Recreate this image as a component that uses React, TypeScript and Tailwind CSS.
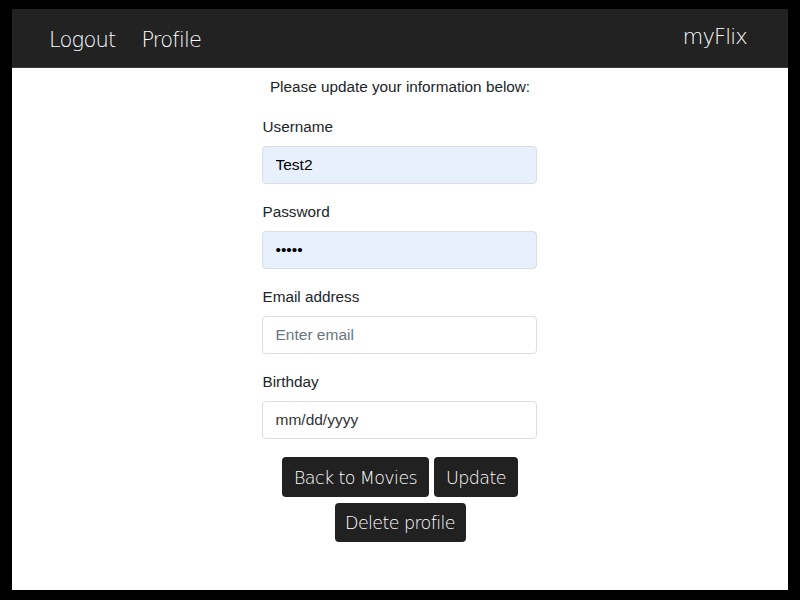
import React from "react";

const thin = { fontFamily: '"DejaVu Sans", sans-serif' };

export default function App() {
  return (
    <div className="w-[800px] h-[600px] bg-black pt-[9px] pl-[12px] pr-[12px] pb-[10px] flex">
      <div className="flex-1 bg-white flex flex-col">
        <header className="h-[59px] bg-[#222222] border-b border-[#3a3a3a] flex items-center pt-[6px] pl-[37px] pr-[41px] text-white text-[21px] font-extralight tracking-[-0.8px]" style={thin}>
          <span>Logout</span>
          <span className="ml-[26px]">Profile</span>
          <span className="ml-auto -translate-y-[3px]">myFlix</span>
        </header>
        <div className="flex flex-col items-center text-[#212529] text-[15.3px]" style={{ fontFamily: '"Liberation Sans", Arial, sans-serif' }}>
          <p className="mt-[7px] leading-[24px]">Please update your information below:</p>
          <form className="w-[275px] mt-[16px] flex flex-col -translate-x-[1px]">
            {[
              { label: "Username", value: "Test2", auto: true },
              { label: "Password", value: "•••••", auto: true },
              { label: "Email address", value: "", ph: "Enter email", auto: false },
              { label: "Birthday", value: "", ph: "mm/dd/yyyy", auto: false },
            ].map((f) => (
              <div key={f.label} className="flex flex-col mb-[16px]">
                <label className="leading-[24px] mb-[7px] pl-[1px]">{f.label}</label>
                <input
                  readOnly
                  type="text"
                  value={f.value}
                  placeholder={f.ph}
                  className={`h-[38px] rounded-[4px] border border-[#dadde2] px-[13px] text-[15.5px] outline-none ${
                    f.auto ? "bg-[#e8f0fe] text-black" : "bg-white"
                  } ${f.label === "Birthday" ? "placeholder:text-[#333]" : "placeholder:text-[#6c757d]"}`}
                />
              </div>
            ))}
          </form>
          <div className="mt-[2px] flex flex-col items-center gap-[6px] text-white text-[17.5px] font-extralight" style={thin}>
            <div className="flex gap-[5px]">
              <button className="w-[147px] h-[40px] bg-[#212121] rounded-[4px] pt-[2px] tracking-[-0.6px]">Back to Movies</button>
              <button className="w-[84px] h-[40px] bg-[#212121] rounded-[4px] pt-[2px] tracking-[-0.6px]">Update</button>
            </div>
            <button className="w-[131px] h-[39px] bg-[#212121] rounded-[4px] pt-[2px] tracking-[-0.6px]">Delete profile</button>
          </div>
        </div>
      </div>
    </div>
  );
}
